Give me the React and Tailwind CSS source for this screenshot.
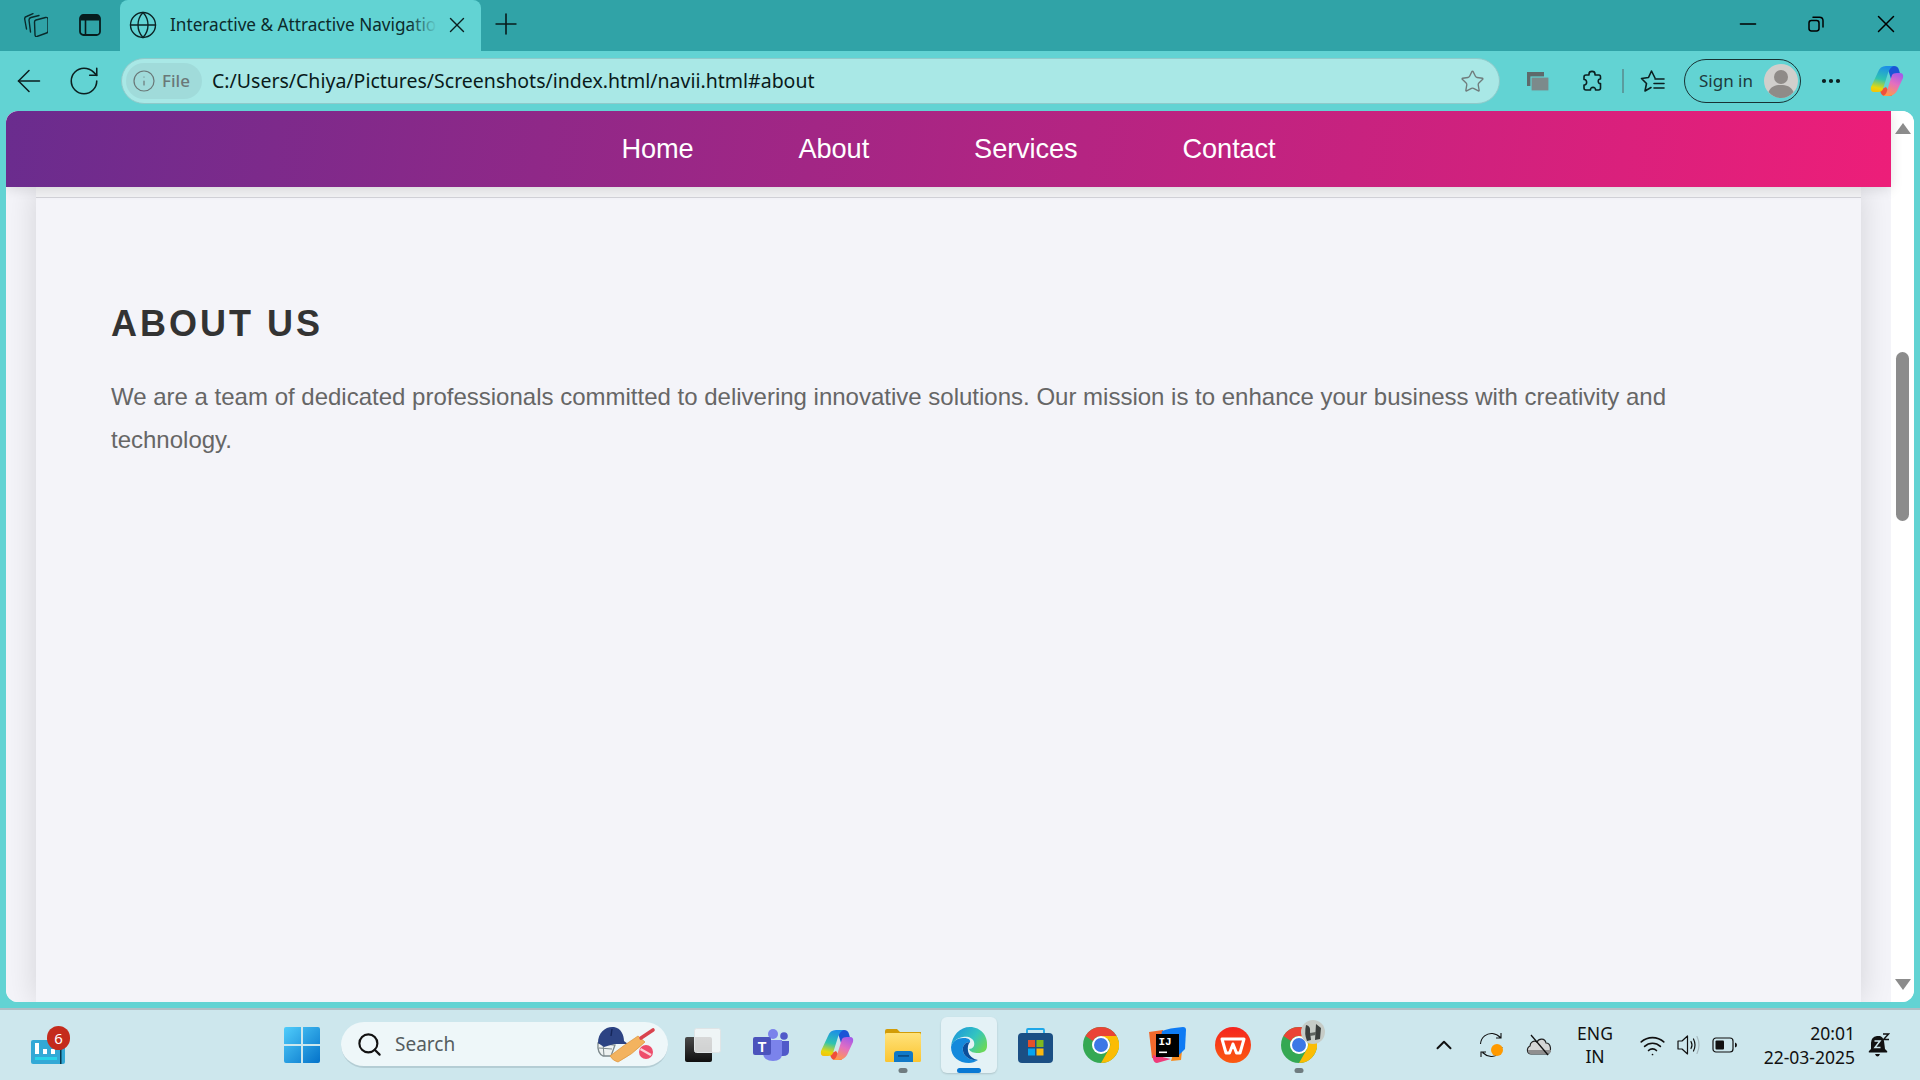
import { Globe, X, Plus, Minus, ArrowLeft, RotateCw, Info, Star, Search, ChevronUp, Wifi, Ellipsis } from 'lucide-react'

const UI_FONT = "font-['Noto_Sans',sans-serif]"

function WorkspacesIcon() {
  return (
    <svg width="24" height="24" viewBox="0 0 24 24" fill="none" stroke="#0a2a2b" strokeWidth="1.4" strokeLinejoin="round" strokeLinecap="round">
      <path d="M2.5 16 L0.7 6 Q0.5 4 2.5 3.5 L9 0.7" />
      <path d="M6.5 19 L5 7 Q5 5 7 4.5 L15 2.5" />
      <path d="M10.5 9 Q10.5 7.5 12 7 L21.5 4.5 Q24 4 24 6.5 L24 18 Q24 19.5 22.5 20 L13 23.5 Q11 24 11 21.5 Z" />
    </svg>
  )
}

function TabActionsIcon() {
  return (
    <svg width="24" height="24" viewBox="0 0 24 24" fill="none">
      <rect x="2" y="2" width="20" height="20" rx="3.5" stroke="#071c1d" strokeWidth="1.8" />
      <path d="M2.5 5.5 Q2.5 2.5 5.5 2.5 L18.5 2.5 Q21.5 2.5 21.5 5.5 L21.5 7.5 L2.5 7.5 Z" fill="#071c1d" />
      <path d="M7.5 7 L7.5 21" stroke="#071c1d" strokeWidth="1.6" />
    </svg>
  )
}

function RestoreIcon() {
  return (
    <svg width="16" height="16" viewBox="0 0 16 16" fill="none" stroke="#000" strokeWidth="1.5">
      <rect x="1" y="4.5" width="10" height="10.5" rx="2.4" />
      <path d="M5 1.2 L11.5 1.2 Q15 1.2 15 4.7 L15 11" strokeLinecap="round" />
    </svg>
  )
}

function SplitScreenIcon() {
  return (
    <svg width="24" height="22" viewBox="0 0 24 22">
      <rect x="1" y="2" width="17" height="14" fill="#5e6a6b" />
      <rect x="5" y="7" width="18" height="14" fill="#7c8a8b" stroke="#62d3d3" strokeWidth="1.2" />
    </svg>
  )
}

function PuzzleIcon() {
  return (
    <svg width="24" height="24" viewBox="0 0 24 24" fill="none" stroke="#0b1f20" strokeWidth="1.6" strokeLinejoin="round">
      <path d="M9 5 C9 1.5 15 1.5 15 5 L15 6 L19 6 Q20.5 6 20.5 8 L20.5 10 C17.5 9.5 17.5 15 20.5 14.5 L20.5 19 Q20.5 21 18.5 21 L15.5 21 C16 17.5 10 17.5 10.5 21 L6 21 Q4 21 4 19 L4 16 C7.5 16.5 7.5 10 4 10.5 L4 8 Q4 6 6 6 L9 6 Z" />
    </svg>
  )
}

function FavoritesIcon() {
  return (
    <svg width="26" height="24" viewBox="0 0 26 24" fill="none" stroke="#0b1f20" strokeWidth="1.6" strokeLinejoin="round" strokeLinecap="round">
      <path d="M15 9 L11.5 2 L8.5 8.5 L1.5 9.5 L6.5 14.5 L5 22 L11 18.5" />
      <path d="M15 10 L24 10 M14 14.5 L24 14.5 M14 19 L24 19" />
    </svg>
  )
}

function AvatarIcon() {
  return (
    <svg width="34" height="34" viewBox="0 0 34 34">
      <circle cx="17" cy="17" r="17" fill="#d1cfcc" />
      <circle cx="17" cy="13" r="7" fill="#8f8b88" />
      <path d="M4.5 28 C7 22 12 21 17 21 C22 21 27 22 29.5 28 C26 32 22 34 17 34 C12 34 8 32 4.5 28 Z" fill="#8f8b88" />
    </svg>
  )
}

function CopilotIcon({ id }) {
  return (
    <svg width="34" height="32" viewBox="0 0 34 32">
      <defs>
        <linearGradient id={`${id}A`} x1="0.5" y1="0" x2="0.3" y2="1">
          <stop offset="0" stopColor="#1c8fe6" />
          <stop offset="0.5" stopColor="#2fc4b0" />
          <stop offset="0.85" stopColor="#e8d80c" />
          <stop offset="1" stopColor="#f2c40a" />
        </linearGradient>
        <linearGradient id={`${id}B`} x1="0.7" y1="0" x2="0.3" y2="1">
          <stop offset="0" stopColor="#a65be8" />
          <stop offset="0.45" stopColor="#e36fc0" />
          <stop offset="1" stopColor="#ff9a4a" />
        </linearGradient>
      </defs>
      <path d="M17 1 L24 1 Q28 1 29 5 L31 12 L21 14 Z" fill="#1a54d6" />
      <path d="M10 25 L16 22 L22 31 L15 31 Q11 31 10 25 Z" fill="#f0503a" />
      <path d="M8 7 Q10 1 16 1 L24 1 Q20 2 18 8 L13 24 Q12 27 8 27 L4 27 Q0 27 1 22 Z" fill={`url(#${id}A)`} />
      <path d="M22 10 Q23 8 27 8 L30 8 Q34 8 33 13 L27 26 Q24 31 18 31 L13 31 Q16 30 17 26 Z" fill={`url(#${id}B)`} />
    </svg>
  )
}

function WidgetsIcon() {
  return (
    <div className="relative w-[39px] h-[38px]">
      <svg width="34" height="24" viewBox="0 0 34 24" className="absolute left-0 bottom-0">
        <rect x="0" y="0" width="34" height="24" rx="2" fill="#33a9d6" />
        <rect x="4" y="3" width="4" height="11" fill="#fff" />
        <rect x="12" y="9" width="4" height="5" fill="#fff" />
        <rect x="20" y="9" width="4" height="5" fill="#fff" />
        <rect x="4" y="17" width="22" height="3" fill="#27d3ea" />
        <rect x="29" y="0" width="1.5" height="24" fill="#06364a" />
      </svg>
      <span className="absolute left-[16px] top-0 w-[23px] h-[24px] rounded-full bg-[#c42b1c] text-white text-[15px] leading-[24px] text-center font-['Noto_Sans',sans-serif]">6</span>
    </div>
  )
}

function WindowsIcon() {
  return (
    <svg width="36" height="36" viewBox="0 0 36 36">
      <defs>
        <linearGradient id="winG" x1="0" y1="0" x2="1" y2="1">
          <stop offset="0" stopColor="#50cdfb" />
          <stop offset="1" stopColor="#0472c9" />
        </linearGradient>
      </defs>
      <path d="M0 2 Q0 0 2 0 L17 0 L17 17 L0 17 Z M19 0 L34 0 Q36 0 36 2 L36 17 L19 17 Z M0 19 L17 19 L17 36 L2 36 Q0 36 0 34 Z M19 19 L36 19 L36 34 Q36 36 34 36 L19 36 Z" fill="url(#winG)" />
    </svg>
  )
}

function CricketDoodle() {
  return (
    <svg width="60" height="38" viewBox="0 0 60 38">
      <path d="M2 18 Q1 28 7 31 L15 31 L19 20 Z" fill="#eef2f1" stroke="#7d898c" strokeWidth="1.3" />
      <path d="M3 23 L16 24 M7 18 L8 31" stroke="#7d898c" strokeWidth="1" fill="none" />
      <path d="M2 18 C2 7 10 1 18 2 C25 3 28 10 28 16 L32 19 L18 19 L8 22 Z" fill="#2c4383" />
      <path d="M16 4 L15 11" stroke="#15265a" strokeWidth="1.4" />
      <path d="M14 31 Q28 20 42 11 L49 17 Q36 30 22 37 Q17 36 14 31 Z" fill="#f3b35f" stroke="#e09a45" strokeWidth="0.8" />
      <path d="M45 13 L57 5" stroke="#d9434e" strokeWidth="3.6" strokeLinecap="round" />
      <circle cx="50" cy="27" r="7" fill="#ee4d6b" />
      <path d="M44.5 24 L55 30" stroke="#fbd2d9" strokeWidth="2.4" />
    </svg>
  )
}

function TaskViewIcon() {
  return (
    <svg width="36" height="34" viewBox="0 0 36 34">
      <defs>
        <linearGradient id="tvG" x1="0" y1="0" x2="0" y2="1">
          <stop offset="0" stopColor="#4a4a4a" />
          <stop offset="1" stopColor="#0f0f0f" />
        </linearGradient>
      </defs>
      <rect x="0" y="9" width="27" height="25" rx="2" fill="url(#tvG)" />
      <rect x="9.5" y="0.5" width="26" height="24" rx="2" fill="#f7f8f8" fillOpacity="0.82" stroke="#dfe4e6" />
    </svg>
  )
}

function TeamsIcon() {
  return (
    <svg width="36" height="32" viewBox="0 0 36 32">
      <circle cx="20" cy="5" r="5" fill="#7b83eb" />
      <circle cx="31" cy="7" r="3.8" fill="#5059c9" />
      <path d="M26 12 L36 12 L36 22 Q36 27 30 27 L26 27 Z" fill="#5059c9" />
      <path d="M10 11 L29 11 L29 25 Q29 32 20 32 Q11 32 10 25 Z" fill="#7b83eb" />
      <rect x="0" y="8" width="18" height="18" rx="2" fill="#4b53bc" />
      <text x="9" y="22.5" textAnchor="middle" fontFamily="'Liberation Sans',sans-serif" fontWeight="700" fontSize="14" fill="#fff">T</text>
    </svg>
  )
}

function FolderIcon() {
  return (
    <svg width="36" height="33" viewBox="0 0 36 33">
      <defs>
        <linearGradient id="fdG" x1="0" y1="0" x2="0" y2="1">
          <stop offset="0" stopColor="#ffe27a" />
          <stop offset="1" stopColor="#fbc531" />
        </linearGradient>
      </defs>
      <path d="M0 2 Q0 0 2 0 L12 0 L15 3 L36 3 L36 10 L0 10 Z" fill="#d29c07" />
      <rect x="0" y="4" width="36" height="29" rx="1.5" fill="url(#fdG)" />
      <path d="M9 33 L9 25 Q9 22 12 22 L25 22 Q28 22 28 25 L28 33 Z" fill="#1079c7" />
      <rect x="13" y="26" width="11" height="1.8" fill="#0a4f88" />
    </svg>
  )
}

function EdgeIcon() {
  return (
    <svg width="37" height="36" viewBox="0 0 37 36">
      <defs>
        <linearGradient id="egA" x1="0.1" y1="0.2" x2="1" y2="0.7">
          <stop offset="0" stopColor="#1f9cd8" />
          <stop offset="0.55" stopColor="#33c5c0" />
          <stop offset="1" stopColor="#6ad85a" />
        </linearGradient>
      </defs>
      <path d="M0 20 C1 14 7 11 12 11 C17 10.5 20 13 19 15 C14 15 11 19 12 24 C13 30 20 34 27 33 C24 35 21 36 18 36 C8 36 0 30 0 20 Z" fill="#1489dc" />
      <path d="M19 15 C14 15 11 19 12 24 C13 30 20 34 27 33 C22 32 18 29 17 24 C16.5 20 17 17 19 15 Z" fill="#0b4f9c" />
      <path d="M0 20 C1 8 9 0 19 0 C30 0 37 9 36 19 C36 24 32 26 27 26 C23 26 19 25 18 22 C22 22 24 19 23 15 C22 11 17 9 12 10 C6 11 1 15 0 20 Z" fill="url(#egA)" />
    </svg>
  )
}

function StoreIcon() {
  return (
    <svg width="35" height="35" viewBox="0 0 35 35">
      <path d="M9 8 L9 2 Q9 1 10 1 L25 1 Q26 1 26 2 L26 8" fill="none" stroke="#1ea7e8" strokeWidth="1.8" />
      <rect x="0" y="5" width="35" height="30" rx="4" fill="#1b4f84" />
      <rect x="10" y="12" width="7" height="7" fill="#e5502a" />
      <rect x="18.5" y="12" width="7" height="7" fill="#7fb81f" />
      <rect x="10" y="20.5" width="7" height="7" fill="#06a4ef" />
      <rect x="18.5" y="20.5" width="7" height="7" fill="#fcb80f" />
    </svg>
  )
}

function ChromeIcon() {
  return (
    <svg width="36" height="36" viewBox="0 0 36 36">
      <circle cx="18" cy="18" r="18" fill="#34a853" />
      <path d="M18 0 A18 18 0 0 1 33.6 9 L18 9 A9 9 0 0 0 10 14 L2.5 9 A18 18 0 0 1 18 0 Z" fill="#ea4335" />
      <path d="M33.6 9 A18 18 0 0 1 18 36 L26 22 A9 9 0 0 0 26 13 L18 9 Z" fill="#fbbc04" />
      <circle cx="18" cy="18" r="9" fill="#fff" />
      <circle cx="18" cy="18" r="7" fill="#3c78e6" />
    </svg>
  )
}

function IntellijIcon() {
  return (
    <div className="relative w-[37px] h-[36px]">
      <svg width="37" height="36" viewBox="0 0 37 36" className="absolute inset-0">
        <path d="M0 5 L14 3 L14 33 L3 31 Z" fill="#f2692c" />
        <path d="M4 28 L22 32 L8 36 Q5 36 4 32 Z" fill="#ef3b7a" />
        <path d="M25 24 L33 24 L32 33 L22 34 Z" fill="#f88a1c" />
        <path d="M13 4 Q20 1 34 0 Q37 0 37 3 L36 22 L28 30 L12 12 Z" fill="#0e7bf4" />
        <rect x="7" y="7" width="23" height="23" fill="#000" />
        <rect x="10" y="24.5" width="8" height="1.6" fill="#fff" />
      </svg>
      <span className="absolute left-[10px] top-[8px] text-white text-[11px] leading-[14px] font-bold font-['Liberation_Mono',monospace]">IJ</span>
    </div>
  )
}

function WpsIcon() {
  return (
    <svg width="36" height="36" viewBox="0 0 36 36">
      <defs>
        <linearGradient id="wpG" x1="0" y1="0" x2="0" y2="1">
          <stop offset="0" stopColor="#f5241f" />
          <stop offset="1" stopColor="#fb5a10" />
        </linearGradient>
      </defs>
      <circle cx="18" cy="18" r="18" fill="url(#wpG)" />
      <path d="M7 12 L29 12 L25 26 L21.5 26 L18 17 L14.5 26 L11 26 Z" fill="none" stroke="#fff" strokeWidth="3" strokeLinejoin="round" />
    </svg>
  )
}

function ChromeProfileIcon() {
  return (
    <div className="relative w-[36px] h-[36px]">
      <ChromeIcon />
      <svg width="24" height="24" viewBox="0 0 24 24" className="absolute left-[20px] top-[-7px]">
        <circle cx="12" cy="12" r="12" fill="#c6ccc7" />
        <path d="M5 5 Q3 14 6 21 L10 20 L9 12 Q10 6 5 5 Z M15 4 L14 20 L19 19 L20 8 Z" fill="#3a3f3d" />
        <path d="M9 13 L15 12 L15 15 L9 16 Z" fill="#5d635f" />
      </svg>
    </div>
  )
}

function SyncIcon() {
  return (
    <div className="relative w-[26px] h-[26px]">
      <svg width="26" height="26" viewBox="0 0 26 26" fill="none" stroke="#111" strokeWidth="1.1">
        <path d="M1.5 12 C2 5 8 1 13.5 1.5 C17 1.8 19 3 21.5 5.5 M22 1 L22 6 L17 6" />
        <path d="M23 15 C22 21 17 25 12 24.5 C8.5 24 6 23 3.5 20.5 M2 25 L2 20 L7 20" />
      </svg>
      <span className="absolute left-[12px] top-[12px] w-[12px] h-[12px] rounded-full bg-[#ff9a00]" />
    </div>
  )
}

function OneDriveOffIcon() {
  return (
    <svg width="26" height="22" viewBox="0 0 26 22">
      <path d="M5 20 C1 20 0 14 4 12 C4 8 8 6 11 8 C13 4 19 4 20 9 C25 9 26 17 22 20 Z" fill="#d5d6d6" stroke="#222" strokeWidth="1.2" />
      <path d="M2 16 L25 16 Q25 20 21 20 L5 20 Q2 20 2 16 Z" fill="#8f8f8f" />
      <path d="M5 1 L22 21" stroke="#111" strokeWidth="1.3" />
    </svg>
  )
}

function VolumeIcon() {
  return (
    <svg width="24" height="22" viewBox="0 0 24 22" fill="none" stroke="#111" strokeWidth="1.2" strokeLinejoin="round" strokeLinecap="round">
      <path d="M1 7 L5 7 L10.5 2 L10.5 20 L5 15 L1 15 Z" />
      <path d="M14 7.5 Q16 11 14 14.5 M16.5 5 Q19.5 11 16.5 17" />
      <path d="M20 2.5 Q24 11 20 19.5" stroke="#a7b9bf" />
    </svg>
  )
}

function BatteryIcon() {
  return (
    <svg width="26" height="16" viewBox="0 0 26 16" fill="none">
      <rect x="1" y="1" width="20" height="14" rx="3" stroke="#111" strokeWidth="1.2" />
      <rect x="3.5" y="3.5" width="8.5" height="9" rx="1" fill="#111" />
      <path d="M23 5.5 Q25 6 25 8 Q25 10 23 10.5 Z" fill="#111" />
    </svg>
  )
}

function SnoozeBellIcon() {
  return (
    <svg width="22" height="24" viewBox="0 0 22 24">
      <path d="M1 18 L3 16 L3 10 Q3 4 9 3 L12 3 Q15 4 16 8 L17 16 L19 18 Q20 19.5 18 19.5 L2 19.5 Q0 19.5 1 18 Z" fill="#111" />
      <path d="M7 21 L12 21 Q11 23.5 9.5 23.5 Q8 23.5 7 21 Z" fill="#111" />
      <path d="M6.5 8 L12 8 L7 14.5 L12.5 14.5" stroke="#cde7ed" strokeWidth="1.5" fill="none" />
      <path d="M15 1 L20.5 1 L15.5 6.5 L21 6.5" stroke="#111" strokeWidth="1.4" fill="none" />
    </svg>
  )
}

function BrowserChrome() {
  return (
    <div className={UI_FONT}>
      {/* Tab strip */}
      <div className="h-[51px] bg-[#30a3a7] flex items-end">
        <div className="w-[120px] h-[51px] flex items-center pl-[24px] gap-[30px] pb-[2px]">
          <WorkspacesIcon />
          <TabActionsIcon />
        </div>
        <div className="w-[361px] h-[51px] bg-[#62d3d3] rounded-t-[8px] flex items-center pl-[8px] pb-[2px]">
          <Globe size={30} strokeWidth={1.1} color="#0b2324" />
          <div className="relative ml-[12px] w-[267px] overflow-hidden">
            <span className="block whitespace-nowrap text-[17.2px] text-[#0c2a2b]">Interactive &amp; Attractive Navigation Bar</span>
            <span className="absolute right-0 top-0 bottom-0 w-[28px] bg-[linear-gradient(90deg,rgba(98,211,211,0),#62d3d3)]" />
          </div>
          <X size={26} strokeWidth={1.3} color="#0b1f20" className="ml-[7px]" />
        </div>
        <div className="h-[51px] flex items-center ml-[8px] pb-[3px]">
          <Plus size={34} strokeWidth={1.15} color="#071c1d" />
        </div>
        <div className="ml-auto h-[51px] flex items-center pr-[19px] pb-[3px] gap-[47px]">
          <Minus size={26} strokeWidth={1.4} color="#000" />
          <RestoreIcon />
          <X size={30} strokeWidth={1.2} color="#000" />
        </div>
      </div>

      {/* Address bar row */}
      <div className="h-[60px] bg-[#62d3d3] flex items-center">
        <ArrowLeft size={36} strokeWidth={1.05} color="#0b1f20" className="ml-[11px]" />
        <RotateCw size={34} strokeWidth={1.1} color="#0b1f20" className="ml-[20px]" />
        <div className="ml-[20px] w-[1379px] h-[46px] rounded-full bg-[#a9e8e6] border border-[#8fcaca] flex items-center pl-[4px] pr-[14px]">
          <div className="h-[36px] w-[76px] rounded-full bg-[#a0dbda] flex items-center pl-[6px] gap-[6px]">
            <Info size={24} strokeWidth={1.2} color="#6a7878" />
            <span className="text-[17px] font-medium text-[#6a7878]">File</span>
          </div>
          <span className="ml-[10px] text-[19.5px] text-[#0a1a1a] whitespace-nowrap">C:/Users/Chiya/Pictures/Screenshots/index.html/navii.html#about</span>
          <Star size={25} strokeWidth={1.3} color="#707c7c" className="ml-auto" />
        </div>
        <div className="ml-[26px] w-[24px]"><SplitScreenIcon /></div>
        <div className="ml-[30px] w-[24px]"><PuzzleIcon /></div>
        <div className="ml-[18px] w-[2px] h-[24px] bg-[#5a9c9e]" />
        <div className="ml-[16px]"><FavoritesIcon /></div>
        <div className="ml-[18px] w-[117px] h-[44px] rounded-full border-[1.5px] border-[#183234] flex items-center pl-[14px] pr-[2px] justify-between">
          <span className="text-[17px] text-[#1d3a3c]">Sign in</span>
          <AvatarIcon />
        </div>
        <Ellipsis size={24} strokeWidth={2.2} color="#0b1f20" className="ml-[18px]" />
        <div className="ml-[27px]"><CopilotIcon id="cpTop" /></div>
      </div>
    </div>
  )
}

function Page() {
  return (
    <div className="flex-1 min-h-0 flex pl-[6px] pr-[6px] pb-[6px] bg-[#62d3d3]">
      <div className="flex-1 min-w-0 flex rounded-t-[12px] rounded-b-[12px] overflow-hidden bg-white">
        <div className="flex-1 min-w-0 flex flex-col bg-[#f4f4f9]">
          <nav className="relative z-10 h-[76px] shrink-0 flex items-center justify-center gap-[105px] bg-[linear-gradient(100deg,#6a2c8e,#ed1e79)] shadow-[0_2px_12px_rgba(0,0,0,0.12)] font-['Liberation_Sans',sans-serif] text-[27.2px] text-white tracking-[-0.1px]">
            <a>Home</a>
            <a>About</a>
            <a>Services</a>
            <a>Contact</a>
          </nav>
          <div className="flex-1 min-h-0 px-[30px] overflow-hidden">
            <div className="h-full bg-[#f4f4f9] shadow-[0_0_30px_rgba(0,0,0,0.14)]">
              <div className="h-[11px] border-b border-[#d2d2d8] bg-[#f2f2f4]" />
              <section className="pt-[105px] px-[75px] font-['Liberation_Sans',sans-serif]">
                <h2 className="text-[36px] leading-[41px] font-bold tracking-[3px] text-[#333]">ABOUT US</h2>
                <p className="mt-[31px] text-[24px] leading-[43.2px] text-[#666]">
                  We are a team of dedicated professionals committed to delivering innovative solutions. Our mission is to enhance your business with creativity and technology.
                </p>
              </section>
            </div>
          </div>
        </div>
        {/* Scrollbar */}
        <div className="w-[23px] shrink-0 bg-white flex flex-col items-center pt-[12px] pb-[12px]">
          <div className="w-0 h-0 border-x-[8px] border-x-transparent border-b-[11px] border-b-[#8c8c8c]" />
          <div className="w-[13px] h-[169px] rounded-full bg-[#8c8c8c] mt-[218px]" />
          <div className="mt-auto w-0 h-0 border-x-[8px] border-x-transparent border-t-[11px] border-t-[#8c8c8c]" />
        </div>
      </div>
    </div>
  )
}

function Slot({ children, active, dot }) {
  return (
    <div className={`relative w-[56px] h-[56px] rounded-[6px] flex items-center justify-center ${active ? 'bg-[#e4f2f6] shadow-[0_1px_2px_rgba(0,0,0,0.15)]' : ''}`}>
      {children}
      {dot && <span className="absolute bottom-0 left-1/2 -translate-x-1/2 w-[9px] h-[5px] rounded-full bg-[#6f7c80]" />}
      {active && <span className="absolute bottom-0 left-1/2 -translate-x-1/2 w-[24px] h-[5px] rounded-full bg-[#0878d4]" />}
    </div>
  )
}

function Taskbar() {
  return (
    <div className={`h-[72px] shrink-0 bg-[#cde7ed] border-t-[2px] border-[#aebfc5] flex items-center ${UI_FONT}`}>
      <div className="ml-[31px]"><WidgetsIcon /></div>
      <div className="ml-[214px] mt-[-1px]"><WindowsIcon /></div>
      <div className="ml-[21px] w-[327px] h-[46px] rounded-full bg-[#eef7f9] border-b-[2px] border-[#b4cdd4] flex items-center pl-[15px] pr-[12px]">
        <Search size={27} strokeWidth={1.9} color="#111" />
        <span className="ml-[12px] text-[19px] text-[#555d60]">Search</span>
        <div className="ml-auto"><CricketDoodle /></div>
      </div>
      <div className="ml-[7px] flex items-center gap-[10px]">
        <Slot><TaskViewIcon /></Slot>
        <div className="ml-[2px]"><Slot><TeamsIcon /></Slot></div>
        <Slot><CopilotIcon id="cpBar" /></Slot>
        <Slot dot><FolderIcon /></Slot>
        <Slot active><EdgeIcon /></Slot>
        <Slot><StoreIcon /></Slot>
        <Slot><ChromeIcon /></Slot>
        <Slot><IntellijIcon /></Slot>
        <Slot><WpsIcon /></Slot>
        <Slot dot><ChromeProfileIcon /></Slot>
      </div>
      <ChevronUp size={26} strokeWidth={1.8} color="#111" className="ml-[104px]" />
      <div className="ml-[22px]"><SyncIcon /></div>
      <div className="ml-[21px]"><OneDriveOffIcon /></div>
      <div className="ml-[25px] w-[36px] text-center text-[17.5px] leading-[23px] text-[#111]">ENG<br />IN</div>
      <Wifi size={27} strokeWidth={1.5} color="#111" className="ml-[26px]" />
      <div className="ml-[11px]"><VolumeIcon /></div>
      <div className="ml-[11px]"><BatteryIcon /></div>
      <div className="ml-[23px] w-[94px] text-right text-[17.5px] leading-[24px] text-[#111] whitespace-nowrap">20:01<br />22-03-2025</div>
      <div className="ml-[13px]"><SnoozeBellIcon /></div>
    </div>
  )
}

export default function App() {
  return (
    <div className="w-[1920px] h-[1080px] overflow-hidden flex flex-col">
      <BrowserChrome />
      <Page />
      <Taskbar />
    </div>
  )
}
